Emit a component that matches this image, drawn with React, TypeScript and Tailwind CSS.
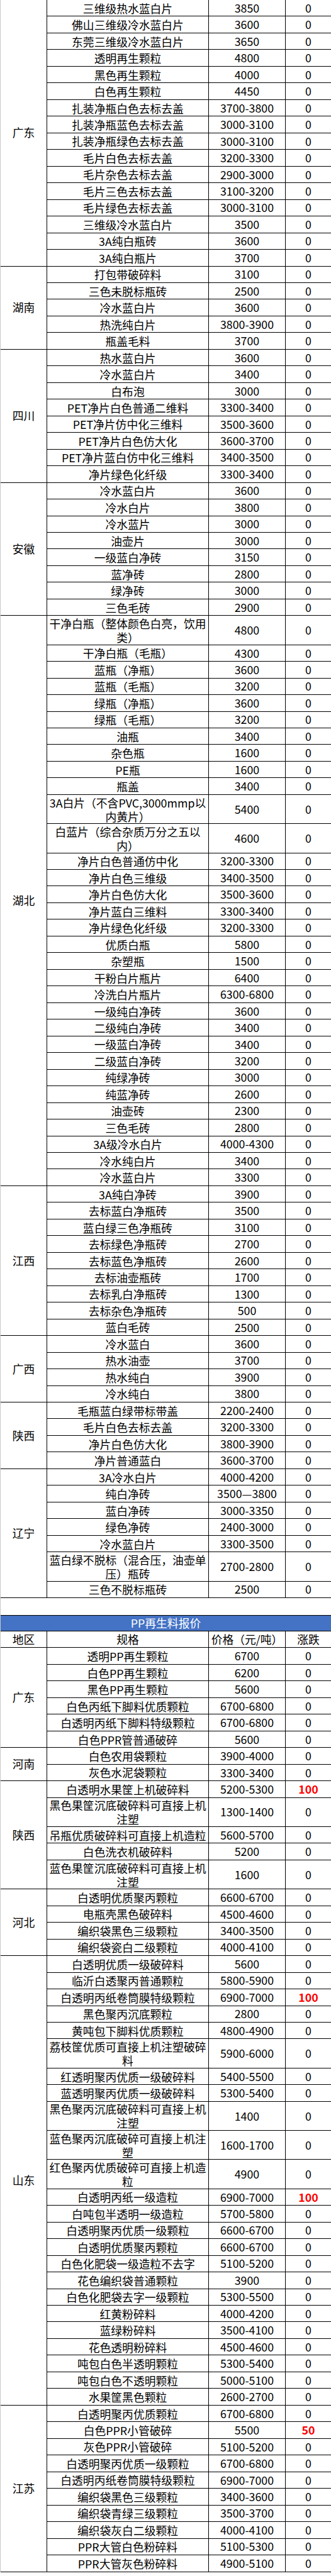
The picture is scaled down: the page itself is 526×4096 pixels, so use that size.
type Row = [string, string, string?];

interface Group {
  region: string;
  rows: Row[];
}

const petGroups: Group[] = [
  {
    region: '广东',
    rows: [
      ['三维级热水蓝白片', '3850'],
      ['佛山三维级冷水蓝白片', '3600'],
      ['东莞三维级冷水蓝白片', '3650'],
      ['透明再生颗粒', '4800'],
      ['黑色再生颗粒', '4000'],
      ['白色再生颗粒', '4450'],
      ['扎装净瓶白色去标去盖', '3700-3800'],
      ['扎装净瓶蓝色去标去盖', '3000-3100'],
      ['扎装净瓶绿色去标去盖', '3000-3100'],
      ['毛片白色去标去盖', '3200-3300'],
      ['毛片杂色去标去盖', '2900-3000'],
      ['毛片三色去标去盖', '3100-3200'],
      ['毛片绿色去标去盖', '3000-3100'],
      ['三维级冷水蓝白片', '3500'],
      ['3A纯白瓶砖', '3600'],
      ['3A纯白瓶片', '3700'],
    ],
  },
  {
    region: '湖南',
    rows: [
      ['打包带破碎料', '3100'],
      ['三色未脱标瓶砖', '2500'],
      ['冷水蓝白片', '3600'],
      ['热洗纯白片', '3800-3900'],
      ['瓶盖毛料', '3700'],
    ],
  },
  {
    region: '四川',
    rows: [
      ['热水蓝白片', '3600'],
      ['冷水蓝白片', '3400'],
      ['白布泡', '3000'],
      ['PET净片白色普通二维料', '3300-3400'],
      ['PET净片仿中化三维料', '3500-3600'],
      ['PET净片白色仿大化', '3600-3700'],
      ['PET净片蓝白仿中化三维料', '3400-3500'],
      ['净片绿色化纤级', '3300-3400'],
    ],
  },
  {
    region: '安徽',
    rows: [
      ['冷水蓝白片', '3600'],
      ['冷水白片', '3800'],
      ['冷水蓝片', '3000'],
      ['油壶片', '3000'],
      ['一级蓝白净砖', '3150'],
      ['蓝净砖', '2800'],
      ['绿净砖', '3000'],
      ['三色毛砖', '2900'],
    ],
  },
  {
    region: '湖北',
    rows: [
      ['干净白瓶（整体颜色白亮，饮用类）', '4800'],
      ['干净白瓶（毛瓶）', '4300'],
      ['蓝瓶（净瓶）', '3600'],
      ['蓝瓶（毛瓶）', '3200'],
      ['绿瓶（净瓶）', '3600'],
      ['绿瓶（毛瓶）', '3200'],
      ['油瓶', '3400'],
      ['杂色瓶', '1600'],
      ['PE瓶', '1600'],
      ['瓶盖', '3400'],
      ['3A白片（不含PVC,3000mmp以内黄片）', '5400'],
      ['白蓝片（综合杂质万分之五以内）', '4600'],
      ['净片白色普通仿中化', '3200-3300'],
      ['净片白色三维级', '3400-3500'],
      ['净片白色仿大化', '3500-3600'],
      ['净片蓝白三维料', '3300-3400'],
      ['净片绿色化纤级', '3200-3300'],
      ['优质白瓶', '5800'],
      ['杂塑瓶', '1500'],
      ['干粉白片瓶片', '6400'],
      ['冷洗白片瓶片', '6300-6800'],
      ['一级纯白净砖', '3600'],
      ['二级纯白净砖', '3400'],
      ['一级蓝白净砖', '3400'],
      ['二级蓝白净砖', '3200'],
      ['纯绿净砖', '3000'],
      ['纯蓝净砖', '2600'],
      ['油壶砖', '2300'],
      ['三色毛砖', '2800'],
      ['3A级冷水白片', '4000-4300'],
      ['冷水纯白片', '3400'],
      ['冷水蓝白片', '3300'],
    ],
  },
  {
    region: '江西',
    rows: [
      ['3A纯白净砖', '3900'],
      ['去标蓝白净瓶砖', '3500'],
      ['蓝白绿三色净瓶砖', '3100'],
      ['去标绿色净瓶砖', '2700'],
      ['去标蓝色净瓶砖', '2600'],
      ['去标油壶瓶砖', '1700'],
      ['去标乳白净瓶砖', '1300'],
      ['去标杂色净瓶砖', '500'],
      ['蓝白毛砖', '2500'],
    ],
  },
  {
    region: '广西',
    rows: [
      ['冷水蓝白', '3600'],
      ['热水油壶', '3700'],
      ['热水纯白', '3900'],
      ['冷水纯白', '3800'],
    ],
  },
  {
    region: '陕西',
    rows: [
      ['毛瓶蓝白绿带标带盖', '2200-2400'],
      ['毛片白色去标去盖', '3200-3300'],
      ['净片白色仿大化', '3800-3900'],
      ['净片普通蓝白', '3600-3700'],
    ],
  },
  {
    region: '辽宁',
    rows: [
      ['3A冷水白片', '4000-4200'],
      ['纯白净砖', '3500—3800'],
      ['蓝白净砖', '3000-3350'],
      ['绿色净砖', '2400-3000'],
      ['冷水蓝白片', '3300-3500'],
      ['蓝白绿不脱标（混合压，油壶单压）瓶砖', '2700-2800'],
      ['三色不脱标瓶砖', '2500'],
    ],
  },
];

const ppGroups: Group[] = [
  {
    region: '广东',
    rows: [
      ['透明PP再生颗粒', '6700'],
      ['白色PP再生颗粒', '6200'],
      ['黑色PP再生颗粒', '5600'],
      ['白色丙纸下脚料优质颗粒', '6700-6800'],
      ['白透明丙纸下脚料特级颗粒', '6700-6800'],
      ['白色PPR管普通破碎', '5600'],
    ],
  },
  {
    region: '河南',
    rows: [
      ['白色农用袋颗粒', '3900-4000'],
      ['灰色水泥袋颗粒', '3300-3400'],
    ],
  },
  {
    region: '陕西',
    rows: [
      ['白透明水果筐上机破碎料', '5200-5300', '100'],
      ['黑色果筐沉底破碎料可直接上机注塑', '1300-1400'],
      ['吊瓶优质破碎料可直接上机造粒', '5600-5700'],
      ['白色洗衣机破碎料', '5200'],
      ['蓝色果筐沉底破碎料可直接上机注塑', '1600'],
    ],
  },
  {
    region: '河北',
    rows: [
      ['白透明优质聚丙颗粒', '6600-6700'],
      ['电瓶壳黑色破碎料', '4500-4600'],
      ['编织袋黑色三级颗粒', '3400-3500'],
      ['编织袋瓷白二级颗粒', '4000-4100'],
    ],
  },
  {
    region: '山东',
    rows: [
      ['白透明优质一级破碎料', '5600'],
      ['临沂白透聚丙普通颗粒', '5800-5900'],
      ['白透明丙纸卷筒膜特级颗粒', '6900-7000', '100'],
      ['黑色聚丙沉底颗粒', '2800'],
      ['黄吨包下脚料优质颗粒', '4800-4900'],
      ['荔枝筐优质可直接上机注塑破碎料', '5900-6000'],
      ['红透明聚丙优质一级破碎料', '5400-5500'],
      ['蓝透明聚丙优质一级破碎料', '5300-5400'],
      ['黑色聚丙沉底破碎料可直接上机注塑', '1400'],
      ['蓝色聚丙沉底破碎可直接上机注塑', '1600-1700'],
      ['红色聚丙优质破碎可直接上机造粒', '4900'],
      ['白透明丙纸一级造粒', '6900-7000', '100'],
      ['白吨包半透明一级造粒', '5700-5800'],
      ['白透明聚丙优质一级颗粒', '6600-6700'],
      ['白透明优质聚丙颗粒', '6600-6700'],
      ['白色化肥袋一级造粒不去字', '5100-5200'],
      ['花色编织袋普通颗粒', '3900'],
      ['白色化肥袋去字一级颗粒', '5300-5500'],
      ['红黄粉碎料', '4000-4200'],
      ['蓝绿粉碎料', '3500-4100'],
      ['花色透明粉碎料', '4500-4600'],
      ['吨包白色半透明颗粒', '5300-5400'],
      ['吨包白色不透明颗粒', '5000-5100'],
      ['水果筐黑色颗粒', '2600-2700'],
    ],
  },
  {
    region: '江苏',
    rows: [
      ['白透明聚丙优质颗粒', '6700-6800'],
      ['白色PPR小管破碎', '5500', '50'],
      ['灰色PPR小管破碎', '5100-5200'],
      ['白透明聚丙优质一级颗粒', '6700-6800'],
      ['白透明丙纸卷筒膜特级颗粒', '6900-7000'],
      ['编织袋黑色三级颗粒', '3400-3600'],
      ['编织袋青绿三级颗粒', '3500-3700'],
      ['编织袋灰白二级颗粒', '4000-4100'],
      ['PPR大管白色粉碎料', '5100-5300'],
      ['PPR大管灰色粉碎料', '4900-5100'],
    ],
  },
];

// names longer than 14 characters wrap to a second line in the item column
const isTall = (name: string) => name.length > 14;

function PriceRow({ row }: { row: Row }) {
  const [name, price, delta = '0'] = row;
  const up = delta !== '0';
  return (
    <div
      className={`grid grid-cols-[257px_122px_1fr] border-b border-black ${
        isTall(name) ? 'h-[46.34px]' : 'h-[26.48px]'
      }`}
    >
      <div className="flex items-center justify-center border-l border-black text-center leading-[22px]">
        {name}
      </div>
      <div className="flex items-center justify-center border-l border-black">{price}</div>
      <div
        className={`flex items-center justify-center border-l border-black ${
          up ? 'font-bold text-[#ff0000]' : ''
        }`}
      >
        {delta}
      </div>
    </div>
  );
}

function RegionGroup({ group }: { group: Group }) {
  return (
    <div className="flex">
      <div className="flex w-[73px] shrink-0 items-center justify-center border-b border-black">
        {group.region}
      </div>
      <div className="flex flex-1 flex-col">
        {group.rows.map((row, i) => (
          <PriceRow key={i} row={row} />
        ))}
      </div>
    </div>
  );
}

export default function App() {
  return (
    <div
      className="w-[526px] border-l border-[#c8c8c8] bg-white text-[17.8px] leading-none text-black"
      style={{ fontFamily: '"Noto Sans CJK SC", "Noto Sans", sans-serif' }}
    >
      {petGroups.map((g) => (
        <RegionGroup key={g.region} group={g} />
      ))}

      <div className="h-[26.48px]" />

      <div className="flex h-[26.48px] items-center justify-center border-y border-black bg-[#4472c4] text-white">
        PP再生料报价
      </div>
      <div className="grid h-[26.48px] grid-cols-[73px_257px_122px_1fr] border-b border-black">
        <div className="flex items-center justify-center">地区</div>
        <div className="flex items-center justify-center border-l border-black">规格</div>
        <div className="flex items-center justify-center border-l border-black whitespace-nowrap">
          价格（元/吨）
        </div>
        <div className="flex items-center justify-center border-l border-black">涨跌</div>
      </div>

      {ppGroups.map((g) => (
        <RegionGroup key={g.region} group={g} />
      ))}
    </div>
  );
}
